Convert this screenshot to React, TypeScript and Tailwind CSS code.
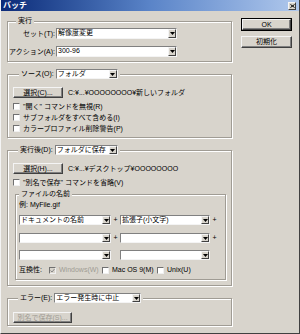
const font = { fontFamily: '"Liberation Sans", "Noto Sans CJK JP", sans-serif' };

const Combo = ({ w, text = "" }: { w: string; text?: string }) => (
  <div className={`flex h-[10px] shrink-0 ${w} bg-white border border-[#808080] border-r-[#f4f4f4] border-b-[#f4f4f4]`}>
    <span className="flex-1 overflow-hidden whitespace-nowrap pl-[1px] text-[7px] leading-[8px] text-black">{text}</span>
    <span className="flex w-[8px] items-center justify-center bg-[#d8d4cc] border border-[#f4f4f4] border-r-[#404040] border-b-[#404040]">
      <svg width="5" height="3" viewBox="0 0 5 3">
        <polygon points="0,0 5,0 2.5,3" fill="#000" />
      </svg>
    </span>
  </div>
);

const Check = ({ checked = false, disabled = false }: { checked?: boolean; disabled?: boolean }) => (
  <span
    className={`flex h-[7px] w-[7px] shrink-0 items-center justify-center border border-[#707070] border-r-[#f0f0f0] border-b-[#f0f0f0] ${disabled ? "bg-[#d8d4cc]" : "bg-white"}`}
  >
    {checked && (
      <svg width="5" height="5" viewBox="0 0 5 5">
        <polyline points="0.5,2.5 2,4 4.5,1" fill="none" stroke={disabled ? "#888" : "#000"} strokeWidth="1" />
      </svg>
    )}
  </span>
);

const Btn = ({ w, text, disabled = false }: { w: string; text: string; disabled?: boolean }) => (
  <div
    className={`flex h-[11px] shrink-0 ${w} items-center justify-center whitespace-nowrap bg-[#d8d4cc] border border-[#f4f4f4] border-r-[#404040] border-b-[#404040] shadow-[inset_-1px_-1px_0_#808080] text-[7px] leading-[8px] ${disabled ? "text-[#a09c94]" : "text-black"}`}
  >
    {text}
  </div>
);

const CheckRow = ({ label }: { label: string }) => (
  <div className="flex h-[11px] items-center gap-[3px] pl-[5px] text-[7px] leading-[8px] whitespace-nowrap">
    <Check />
    <span>{label}</span>
  </div>
);

const group = "border border-[#a09c94] shadow-[inset_1px_1px_0_#fff,1px_1px_0_#fff] min-w-0 m-0";
const legend = "h-[10px] bg-[#d8d4cc] px-[2px] text-[7px] leading-[10px] flex items-center gap-[2px] whitespace-nowrap";

export default function App() {
  return (
    <div
      className="flex h-[334px] w-[300px] flex-col overflow-hidden bg-[#d8d4cc] border-l border-r border-b border-l-[#f4f4f4] border-r-[#404040] border-b-[#404040] text-black"
      style={font}
    >
      <div className="flex h-[11px] shrink-0 items-center justify-between bg-gradient-to-r from-[#0c2a78] via-[#5a84c8] to-[#b0c8ec] pl-[2px] pr-[3px]">
        <span className="text-[8px] font-bold leading-[10px] text-white">バッチ</span>
        <span className="flex h-[8px] w-[8px] items-center justify-center bg-[#d8d4cc] border border-[#f4f4f4] border-r-[#404040] border-b-[#404040]">
          <svg width="5" height="4" viewBox="0 0 5 4">
            <path d="M0.5 0.5 L4.5 3.5 M4.5 0.5 L0.5 3.5" stroke="#000" strokeWidth="1" />
          </svg>
        </span>
      </div>

      <div className="flex pl-[6px] pt-[5px]">
        <div className="flex w-[225px] flex-col">
          <fieldset className={`${group} pb-[4px]`}>
            <legend className={`${legend} ml-[8px]`}>実行</legend>
            <div className="flex flex-col gap-[7px] pt-[2px]">
              <div className="flex h-[11px] items-center">
                <span className="w-[48px] pr-[1px] text-right text-[7px] leading-[8px] whitespace-nowrap">セット(T):</span>
                <Combo w="w-[121px] h-[11px]" text="解像度変更" />
              </div>
              <div className="flex h-[11px] items-center">
                <span className="w-[48px] pr-[1px] text-right text-[7px] leading-[8px] whitespace-nowrap">アクション(A):</span>
                <Combo w="w-[121px] h-[11px]" text="300-96" />
              </div>
            </div>
          </fieldset>

          <fieldset className={`${group} mt-[7px] pb-[3px]`}>
            <legend className={`${legend} ml-[11px]`}>
              <span>ソース(O):</span>
              <Combo w="w-[62px]" text="フォルダ" />
            </legend>
            <div className="flex items-center gap-[5px] pl-[5px] pt-[8px]">
              <Btn w="w-[50px]" text="選択(C)..." />
              <span className="whitespace-nowrap text-[7px] leading-[8px]">C:¥...¥OOOOOOOO¥新しいフォルダ</span>
            </div>
            <div className="mt-[3px] flex flex-col">
              <CheckRow label={'"開く" コマンドを無視(R)'} />
              <CheckRow label="サブフォルダをすべて含める(I)" />
              <CheckRow label="カラープロファイル削除警告(P)" />
            </div>
          </fieldset>

          <fieldset className={`${group} mt-[7px] pb-[5px]`}>
            <legend className={`${legend} ml-[10px]`}>
              <span>実行後(D):</span>
              <Combo w="w-[63px]" text="フォルダに保存" />
            </legend>
            <div className="flex items-center gap-[5px] pl-[5px] pt-[8px]">
              <Btn w="w-[50px]" text="選択(H)..." />
              <span className="whitespace-nowrap text-[7px] leading-[8px]">C:¥...¥デスクトップ¥OOOOOOOO</span>
            </div>
            <div className="mt-[3px]">
              <CheckRow label={'"別名で保存" コマンドを省略(V)'} />
            </div>
            <fieldset className={`${group} ml-[7px] mt-[1px] w-[211px] pb-[4px]`}>
              <legend className={`${legend} ml-[3px]`}>ファイルの名前</legend>
              <div className="flex h-[10px] items-center pl-[3px] pt-[1px] text-[7px] leading-[8px]">例: MyFile.gif</div>
              <div className="mt-[6px] flex h-[10px] items-center pl-[3px]">
                <Combo w="w-[92px]" text="ドキュメントの名前" />
                <span className="w-[9px] text-center text-[7px] leading-[8px]">+</span>
                <Combo w="w-[90px]" text="拡張子(小文字)" />
                <span className="w-[9px] text-center text-[7px] leading-[8px]">+</span>
              </div>
              <div className="mt-[8px] flex h-[10px] items-center pl-[3px]">
                <Combo w="w-[92px]" />
                <span className="w-[9px] text-center text-[7px] leading-[8px]">+</span>
                <Combo w="w-[90px]" />
                <span className="w-[9px] text-center text-[7px] leading-[8px]">+</span>
              </div>
              <div className="mt-[7px] flex h-[10px] items-center pl-[3px]">
                <Combo w="w-[92px]" />
                <span className="w-[9px]" />
                <Combo w="w-[90px]" />
              </div>
              <div className="mt-[5px] flex h-[10px] items-center pl-[3px] text-[7px] leading-[8px] whitespace-nowrap">
                <span className="w-[30px]">互換性:</span>
                <Check checked disabled />
                <span className="ml-[3px] w-[43px] text-[#a09c94]">Windows(W)</span>
                <Check />
                <span className="ml-[3px] w-[45px]">Mac OS 9(M)</span>
                <Check />
                <span className="ml-[3px]">Unix(U)</span>
              </div>
            </fieldset>
          </fieldset>

          <fieldset className={`${group} mt-[7px] pb-[2px]`}>
            <legend className={`${legend} ml-[10px]`}>
              <span>エラー(E):</span>
              <Combo w="w-[87px]" text="エラー発生時に中止" />
            </legend>
            <div className="pl-[5px] pt-[9px]">
              <Btn w="w-[59px]" text="別名で保存(S)..." disabled />
            </div>
          </fieldset>
        </div>

        <div className="ml-[9px] mt-[2px] flex flex-col gap-[5px]">
          <div className="border border-black">
            <Btn w="w-[49px] h-[10px]" text="OK" />
          </div>
          <Btn w="w-[51px] h-[12px]" text="初期化" />
        </div>
      </div>
    </div>
  );
}
